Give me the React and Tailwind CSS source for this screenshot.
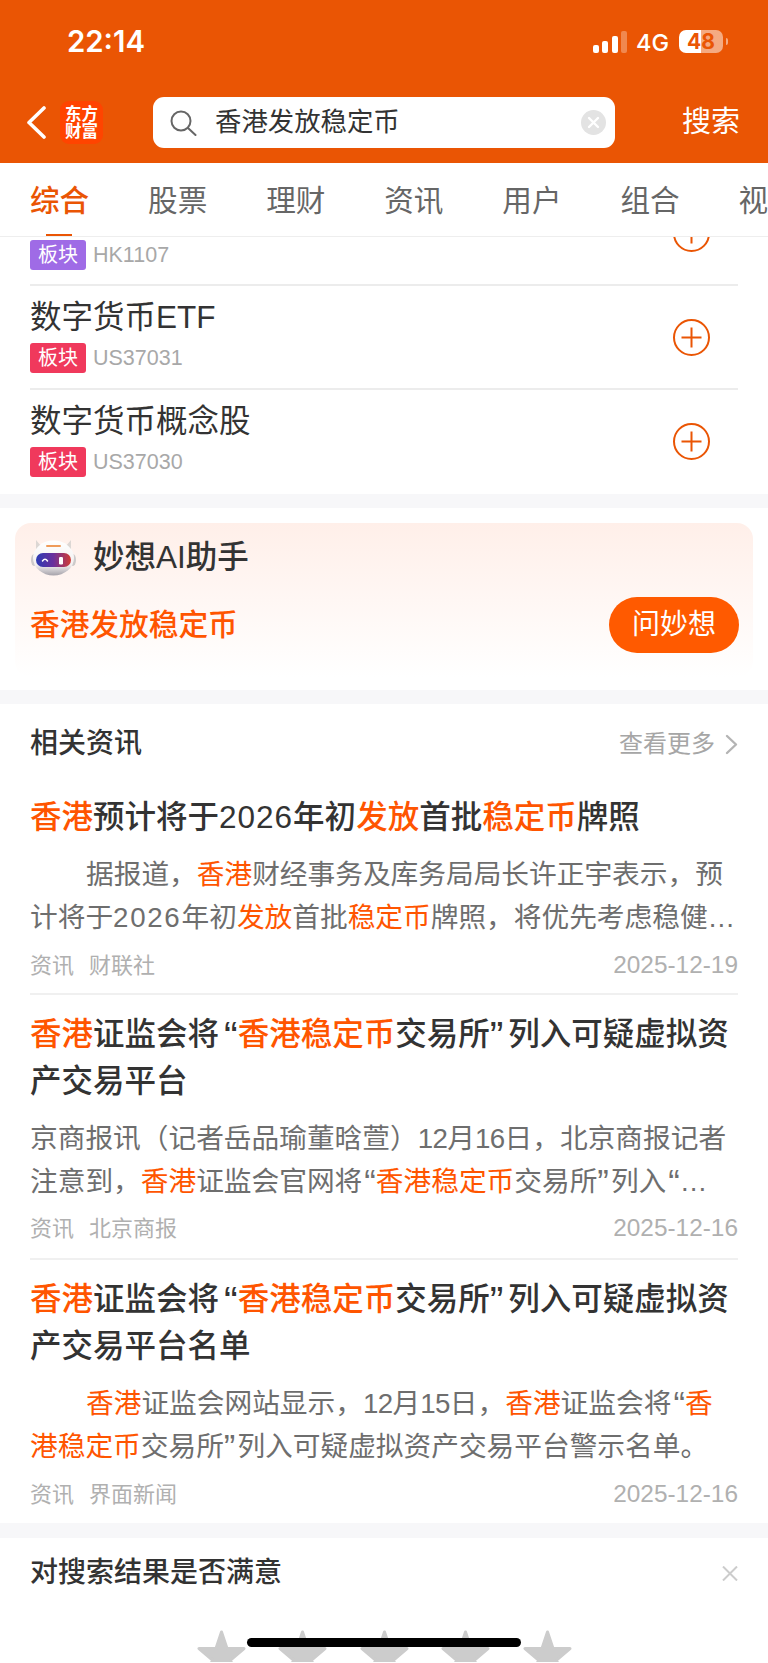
import React from "react";

const H = ({ children }) => <span className="text-[#ff5500]">{children}</span>;
const TN = ({ children }) => <span className="tracking-[1px]">{children}</span>;
const BN = ({ children }) => <span className="tracking-[1.7px]">{children}</span>;
const DN = ({ children }) => <span className="tracking-[-0.6px]">{children}</span>;
const TL = () => <span className="ml-[5px] align-[-0.12em] text-[1.3em] leading-none">“</span>;
const TR = () => <span className="mr-[5px] align-[-0.12em] text-[1.3em] leading-none">”</span>;
const BL = () => <span className="ml-[2px] align-[-0.1em] text-[1.25em] leading-none">“</span>;
const BR = () => <span className="mr-[2px] align-[-0.1em] text-[1.25em] leading-none">”</span>;

function Plus() {
  return (
    <svg width="37" height="37" viewBox="0 0 37 37" fill="none" stroke="#ea5504" strokeWidth="2">
      <circle cx="18.5" cy="18.5" r="17.5" />
      <path d="M8.5 18.5h20M18.5 8.5v20" />
    </svg>
  );
}

function Badge({ color, code }) {
  return (
    <div className="flex items-center gap-[7px]">
      <span className={`flex h-[30px] w-[56px] items-center justify-center rounded-[3px] text-[20px] leading-none text-white ${color}`}>板块</span>
      <span className="text-[21.5px] leading-[30px] text-[#a8a8a8]">{code}</span>
    </div>
  );
}

function Meta({ a, b, date, className }) {
  return (
    <div className={`flex h-[30px] items-center justify-between text-[#b0b0b0] ${className}`}>
      <div className="flex gap-[15px] text-[22px]">
        <span>{a}</span>
        <span>{b}</span>
      </div>
      <span className="text-[24.4px]">{date}</span>
    </div>
  );
}

function Star() {
  return (
    <svg width="49" height="46" viewBox="0 0 49 46" className="shrink-0" fill="#cccccc" stroke="#cccccc" strokeWidth="3" strokeLinejoin="round">
      <path d="M24.5 2 30 18.5H47L33.5 30 40 48 24.5 37 9 48 15.5 30 2 18.5H19Z" />
    </svg>
  );
}

function Robot() {
  return (
    <svg width="48" height="36" viewBox="0 0 48 36">
      <defs>
        <linearGradient id="visor" x1="0" y1="0" x2="1" y2="0">
          <stop offset="0" stopColor="#2c3cb4" />
          <stop offset="0.5" stopColor="#6a2f9c" />
          <stop offset="1" stopColor="#d23c34" />
        </linearGradient>
        <linearGradient id="shell" x1="0" y1="0" x2="0" y2="1">
          <stop offset="0" stopColor="#ffffff" />
          <stop offset="0.7" stopColor="#f3f0f0" />
          <stop offset="1" stopColor="#a5a2aa" />
        </linearGradient>
      </defs>
      <path d="M7 0 12 6 7 10ZM42 0 37 6 42 10Z" fill="#dcd7d4" />
      <ellipse cx="5" cy="20" rx="3" ry="6" fill="#cdcaca" />
      <ellipse cx="44" cy="20" rx="3" ry="6" fill="#cdcaca" />
      <ellipse cx="24.5" cy="18" rx="20.5" ry="17.5" fill="url(#shell)" />
      <rect x="17" y="5" width="15" height="2" rx="1" fill="#ef9b5a" />
      <rect x="7" y="13" width="35" height="14" rx="7" fill="url(#visor)" />
      <path d="M13.5 21q2.5-3.5 5 0" fill="none" stroke="#fff" strokeWidth="1.5" strokeLinecap="round" />
      <rect x="30" y="17" width="4" height="7.5" rx="1.2" fill="#fff" />
    </svg>
  );
}

export default function App() {
  const stack = { fontFamily: '"Liberation Sans","Noto Sans CJK SC",sans-serif' };
  return (
    <div style={stack} className="relative h-[1662px] w-[768px] overflow-hidden bg-white">
      <header className="h-[163px] bg-[#ea5504] text-white">
        <div className="flex h-[97px] items-start justify-between pl-[67px] pr-[40px] pt-[24px]">
          <span className="font-['Inter'] text-[29.4px] font-semibold leading-[36px]">22:14</span>
          <div className="flex items-start">
            <div className="mt-[7px] flex h-[22px] items-end gap-[3.5px]">
              <i className="block h-[8px] w-[6px] rounded-[2px] bg-white" />
              <i className="block h-[12px] w-[6px] rounded-[2px] bg-white" />
              <i className="block h-[17px] w-[6px] rounded-[2px] bg-white" />
              <i className="block h-[22px] w-[6px] rounded-[2px] bg-white/30" />
            </div>
            <span className="ml-[9px] mt-[6px] font-['Inter'] text-[23.5px] font-medium leading-[26px]">4G</span>
            <div className="ml-[10px] mt-[6px] flex h-[23px] w-[44px] items-center justify-center rounded-[7px] bg-linear-to-r from-white from-50% to-white/50 to-50% font-['Inter'] text-[21px] font-bold leading-none text-[#ea5504]">48</div>
            <i className="ml-[3px] mt-[14px] block h-[7px] w-[2px] rounded-r-[2px] bg-white/50" />
          </div>
        </div>
        <div className="flex h-[51px] items-center pl-[26px]">
          <svg width="20" height="33" viewBox="0 0 20 33" fill="none" stroke="#fff" strokeWidth="3.6" strokeLinecap="round" strokeLinejoin="round">
            <path d="M18 2 3 16.5 18 31" />
          </svg>
          <div className="ml-[14px] flex h-[43px] w-[43px] flex-col items-center justify-center rounded-[9px] bg-[#ff4400] text-[16.5px] font-bold leading-[17px]">
            <span>东方</span>
            <span>财富</span>
          </div>
          <div className="ml-[50px] flex h-[51px] w-[462px] items-center rounded-[11px] bg-white pl-[17px] pr-[9px]">
            <svg width="27" height="26" viewBox="0 0 27 26" fill="none" stroke="#666" strokeWidth="2" strokeLinecap="round">
              <circle cx="11" cy="11" r="9.5" />
              <path d="M18 18l7.5 7" />
            </svg>
            <span className="ml-[18px] flex-1 text-[26.4px] leading-none text-[#333]">香港发放稳定币</span>
            <svg width="25" height="25" viewBox="0 0 25 25" fill="none" stroke="#fff" strokeWidth="2.4" strokeLinecap="round">
              <circle cx="12.5" cy="12.5" r="12.5" fill="#e3e3e3" stroke="none" />
              <path d="M8 8l9 9M17 8l-9 9" />
            </svg>
          </div>
          <span className="ml-[67px] text-[29px] leading-none">搜索</span>
        </div>
      </header>

      <nav className="relative z-10 flex h-[74px] items-center gap-[58.9px] overflow-hidden whitespace-nowrap border-b border-[#eeeeee] bg-white pt-[3px] pl-[30px] text-[29.6px] leading-none text-[#666]">
        <span className="font-medium text-[#ea5504]">综合</span>
        <span>股票</span>
        <span>理财</span>
        <span>资讯</span>
        <span>用户</span>
        <span>组合</span>
        <span>视</span>
        <i className="absolute bottom-[0px] left-[46px] block h-[2px] w-[26px] bg-[#ea5504]" />
      </nav>

      <section className="px-[30px]">
        <div className="flex h-[49px] items-start justify-between border-b-2 border-[#ececec] pr-[28px] pt-[3px]">
          <Badge color="bg-[#9f6be6]" code="HK1107" />
          <div className="-mt-[25px]"><Plus /></div>
        </div>
        <div className="flex h-[104px] items-center justify-between border-b-2 border-[#ececec] pr-[28px]">
          <div className="pb-[6px]">
            <div className="mb-[4px] text-[31.5px] leading-[44px] text-[#333]">数字货币ETF</div>
            <Badge color="bg-[#f0395c]" code="US37031" />
          </div>
          <Plus />
        </div>
        <div className="flex h-[104px] items-center justify-between pb-[2px] pr-[28px]">
          <div className="pb-[6px]">
            <div className="mb-[4px] text-[31.5px] leading-[44px] text-[#333]">数字货币概念股</div>
            <Badge color="bg-[#f0395c]" code="US37030" />
          </div>
          <Plus />
        </div>
      </section>

      <div className="h-[14px] bg-[#f7f7f9]" />

      <section className="px-[15px] pb-[13px] pt-[15px]">
        <div className="rounded-[16px] bg-linear-to-b from-[#ffefe9] to-white pb-[24px] pl-[14px] pr-[14px] pt-[17px]">
          <div className="flex h-[36px] items-center gap-[16px]">
            <Robot />
            <span className="text-[31.5px] font-medium leading-none text-[#333]">妙想AI助手</span>
          </div>
          <div className="mt-[21px] flex items-center justify-between">
            <span className="pl-[1px] text-[29.7px] font-medium leading-none text-[#ff5500]">香港发放稳定币</span>
            <button className="h-[56px] w-[130px] rounded-full bg-[#ff5a00] text-[28px] leading-none text-white">问妙想</button>
          </div>
        </div>
      </section>

      <div className="h-[14px] bg-[#f7f7f9]" />

      <section className="px-[30px]">
        <div className="flex h-[72px] items-center justify-between pt-[8px]">
          <span className="text-[28px] font-medium leading-none text-[#333]">相关资讯</span>
          <div className="flex items-center gap-[10px] text-[24px] leading-none text-[#a6a6a6]">
            <span>查看更多</span>
            <svg width="13" height="21" viewBox="0 0 13 21" fill="none" stroke="#b4b4b4" strokeWidth="2.4" strokeLinecap="round" strokeLinejoin="round">
              <path d="M2 2l9 8.5L2 19" />
            </svg>
          </div>
        </div>

        <article className="border-b-2 border-[#f0f0f0] pb-[13px] pt-[18px]">
          <h3 className="h-[47px] whitespace-nowrap text-[31.5px] font-medium leading-[47px] text-[#333]">
            <H>香港</H>预计将于<TN>2026</TN>年初<H>发放</H>首批<H>稳定币</H>牌照
          </h3>
          <div className="mt-[12px] whitespace-nowrap text-[27.7px] leading-[43px] text-[#6e6e6e]">
            <div className="h-[43px] indent-[56px]">据报道，<H>香港</H>财经事务及库务局局长许正宇表示，预</div>
            <div className="h-[43px]">计将于<BN>2026</BN>年初<H>发放</H>首批<H>稳定币</H>牌照，将优先考虑稳健…</div>
          </div>
          <Meta className="mt-[11px]" a="资讯" b="财联社" date="2025-12-19" />
        </article>

        <article className="border-b-2 border-[#f0f0f0] pb-[15px] pt-[16px]">
          <h3 className="whitespace-nowrap text-[31.5px] font-medium leading-[47px] text-[#333]">
            <div className="h-[47px]"><H>香港</H>证监会将<TL /><H>香港稳定币</H>交易所<TR />列入可疑虚拟资</div>
            <div className="h-[47px]">产交易平台</div>
          </h3>
          <div className="mt-[12px] whitespace-nowrap text-[27.7px] leading-[43px] text-[#6e6e6e]">
            <div className="h-[43px]">京商报讯（记者岳品瑜董晗萱）<DN>12</DN>月<DN>16</DN>日，北京商报记者</div>
            <div className="h-[43px]">注意到，<H>香港</H>证监会官网将<BL /><H>香港稳定币</H>交易所<BR />列入<BL />…</div>
          </div>
          <Meta className="mt-[10px]" a="资讯" b="北京商报" date="2025-12-16" />
        </article>

        <article className="pb-[14px] pt-[16px]">
          <h3 className="whitespace-nowrap text-[31.5px] font-medium leading-[47px] text-[#333]">
            <div className="h-[47px]"><H>香港</H>证监会将<TL /><H>香港稳定币</H>交易所<TR />列入可疑虚拟资</div>
            <div className="h-[47px]">产交易平台名单</div>
          </h3>
          <div className="mt-[12px] whitespace-nowrap text-[27.7px] leading-[43px] text-[#6e6e6e]">
            <div className="h-[43px] indent-[56px]"><H>香港</H>证监会网站显示，<DN>12</DN>月<DN>15</DN>日，<H>香港</H>证监会将<BL /><H>香</H></div>
            <div className="h-[43px]"><H>港稳定币</H>交易所<BR />列入可疑虚拟资产交易平台警示名单。</div>
          </div>
          <Meta className="mt-[11px]" a="资讯" b="界面新闻" date="2025-12-16" />
        </article>
      </section>

      <div className="h-[15px] bg-[#f7f7f9]" />

      <section>
        <div className="flex h-[70px] items-center justify-between px-[30px]">
          <span className="text-[28px] font-medium leading-none text-[#333]">对搜索结果是否满意</span>
          <svg width="16" height="15" viewBox="0 0 16 15" fill="none" stroke="#cccccc" strokeWidth="2">
            <path d="M1 0.5l14 14M15 0.5l-14 14" />
          </svg>
        </div>
        <div className="mt-[22px] flex justify-center gap-[32.5px]">
          <Star />
          <Star />
          <Star />
          <Star />
          <Star />
        </div>
      </section>

      <div className="absolute bottom-[15px] left-[247px] h-[9px] w-[274px] rounded-full bg-black" />
    </div>
  );
}
